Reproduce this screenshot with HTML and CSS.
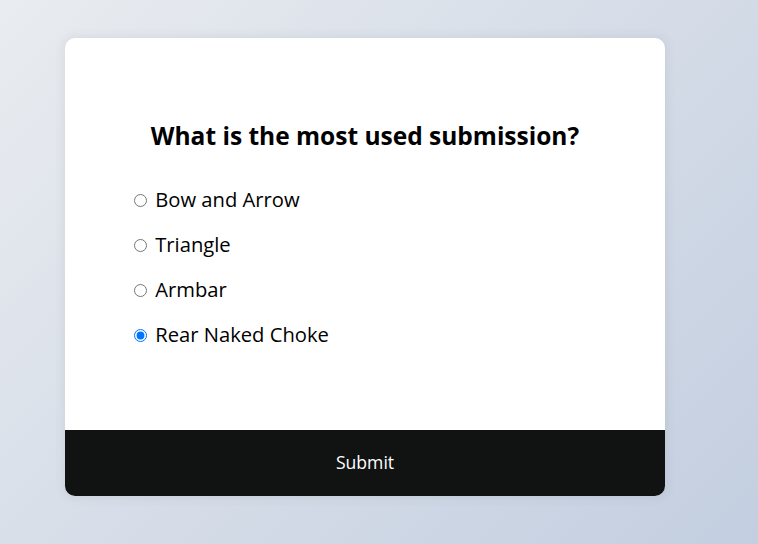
FILE: index.html
```html
<!DOCTYPE html>
<html lang="en">
<head>
<meta charset="UTF-8">
<title>Quiz</title>
<link rel="stylesheet" href="styles.css">
</head>
<body>
<div class="quiz-container">
  <div class="quiz-header">
    <h2 class="question">What is the most used submission?</h2>
    <ul class="answers">
      <li><input type="radio" name="answer" id="a" class="answer"> <label for="a">Bow and Arrow</label></li>
      <li><input type="radio" name="answer" id="b" class="answer"> <label for="b">Triangle</label></li>
      <li><input type="radio" name="answer" id="c" class="answer"> <label for="c">Armbar</label></li>
      <li><input type="radio" name="answer" id="d" class="answer" checked> <label for="d">Rear Naked Choke</label></li>
    </ul>
  </div>
  <button class="submit">Submit</button>
</div>
</body>
</html>
```
FILE: styles.css
```css
* {
  box-sizing: border-box;
}

body {
  margin: 0;
  height: 100vh;
  padding: 0 28px 10px 0;
  display: flex;
  align-items: center;
  justify-content: center;
  background-color: #c5d0e0;
  background-image: linear-gradient(315deg, #c3cee0 0%, #e9ecf0 100%);
  font-family: "Open Sans", "DejaVu Sans", sans-serif;
  overflow: hidden;
}

.quiz-container {
  width: 600px;
  background: #fff;
  border-radius: 10px;
  box-shadow: 0 0 10px 2px rgba(100, 100, 100, 0.1);
  overflow: hidden;
}

.quiz-header {
  padding: 4rem;
}

.question {
  margin: 0;
  padding: 1rem;
  text-align: center;
  font-size: 24.5px;
  font-weight: 700;
  line-height: 36px;
  color: #000;
}

.answers {
  list-style: none;
  margin: 0;
  padding: 0;
}

.answers li {
  font-size: 20.2px;
  margin: 1rem 0;
  line-height: 27px;
  padding-bottom: 2px;
  color: #000;
}

.answers label {
  cursor: pointer;
}

.submit {
  display: block;
  width: 100%;
  border: none;
  background: #111313;
  color: #fff;
  font-family: inherit;
  font-size: 1.1rem;
  line-height: 23px;
  padding: 1.3rem 1.3rem calc(1.3rem + 1.6px);
  cursor: pointer;
}
```
